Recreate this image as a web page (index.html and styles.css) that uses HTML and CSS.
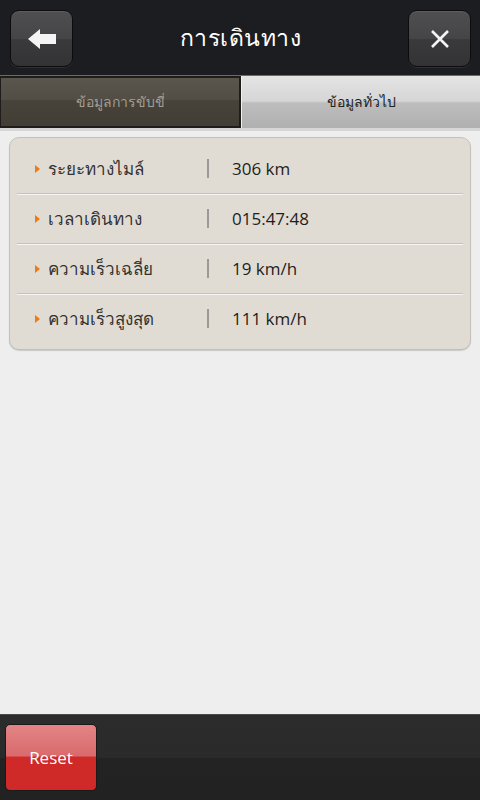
FILE: index.html
```html
<!doctype html>
<html>
  <head>
    <meta charset='utf-8'>
    <title>การเดินทาง</title>
    <link rel="stylesheet" href="styles.css">
  </head>
  <body>

    <div class="header">
      <button class="btn-dark back">
        <svg width="30" height="22" viewBox="0 0 30 22">
          <path d="M1 11 L13 1 L13 6 L29 6 L29 16 L13 16 L13 21 Z" fill="#f4f4f4"/>
        </svg>
      </button>
      <h1>การเดินทาง</h1>
      <button class="btn-dark close">
        <svg width="20" height="20" viewBox="0 0 20 20">
          <path d="M2 2 L18 18 M18 2 L2 18" stroke="#f4f4f4" stroke-width="2.6"/>
        </svg>
      </button>
    </div>

    <div class="tabs">
      <div class="tab active">ข้อมูลการขับขี่</div>
      <div class="tab">ข้อมูลทั่วไป</div>
    </div>

    <div class="content">
      <ul class="stats">
        <li><span class="label">ระยะทางไมล์</span><span class="sep"></span><span class="value">306 km</span></li>
        <li><span class="label">เวลาเดินทาง</span><span class="sep"></span><span class="value">015:47:48</span></li>
        <li><span class="label">ความเร็วเฉลี่ย</span><span class="sep"></span><span class="value">19 km/h</span></li>
        <li><span class="label">ความเร็วสูงสุด</span><span class="sep"></span><span class="value">111 km/h</span></li>
      </ul>
    </div>

    <div class="footer">
      <button class="reset">Reset</button>
    </div>

  </body>
</html>
```

FILE: styles.css
```css
html, body {
  margin: 0;
  height: 100%;
}

body {
  width: 480px;
  height: 800px;
  display: flex;
  flex-direction: column;
  background: #eeeeee;
  font-family: 'Open Sans', 'Noto Sans', 'DejaVu Sans', sans-serif;
  overflow: hidden;
}

button {
  font-family: inherit;
  cursor: pointer;
}

/* header */

.header {
  height: 75px;
  flex: none;
  display: flex;
  align-items: center;
  justify-content: space-between;
  padding: 0 9px 0 10px;
  box-sizing: border-box;
  background: #1b1d21;
}

.header h1 {
  margin: 0;
  color: #fff;
  font-size: 23px;
  font-weight: normal;
  letter-spacing: 0.5px;
}

.btn-dark {
  width: 63px;
  height: 57px;
  margin-top: 2px;
  border: 1px solid #0c0c0e;
  border-radius: 9px;
  background: linear-gradient(#4f4f51 0%, #454547 50%, #3a3a3c 51%, #333335 100%);
  box-shadow: inset 0 1px 0 #5e5e60, 0 1px 0 #2e3035;
  display: flex;
  align-items: center;
  justify-content: center;
  padding: 0;
}

/* tabs */

.tabs {
  height: 56px;
  flex: none;
  display: flex;
  box-sizing: border-box;
  border-top: 1px solid #6a6a6a;
  border-bottom: 3px solid #d6d6d6;
}

.tab {
  flex: 1;
  display: flex;
  align-items: center;
  justify-content: center;
  font-size: 14px;
  color: #222;
  background: linear-gradient(#e4e4e4 0%, #d6d6d6 48%, #bdbdbd 52%, #b0b0b0 100%);
  border-left: 1px solid #f2f2f2;
}

.tab.active {
  color: #a39e94;
  background: linear-gradient(#5a564d 0%, #524e46 45%, #47433b 46%, #423e36 100%);
  border: 2px solid #1e1d1a;
  border-left-width: 1px;
}

/* stats */

.content {
  flex: 1;
  padding: 6px 9px;
}

.stats {
  list-style: none;
  margin: 0;
  padding: 6px 7px;
  background: #e1dcd3;
  border: 1px solid #c4c1bc;
  border-radius: 10px;
  box-shadow: 0 1px 1px #c8c8c8;
}

.stats li {
  height: 49px;
  display: flex;
  align-items: center;
  border-bottom: 1px solid #c6c2bb;
  box-shadow: 0 1px 0 #f8f6f2;
  font-size: 17px;
  color: #222;
}

.stats li:last-child {
  border-bottom: none;
  box-shadow: none;
}

.label {
  width: 190px;
  padding-left: 31px;
  box-sizing: border-box;
  position: relative;
  color: #333;
}

.label:before {
  content: '';
  position: absolute;
  left: 18px;
  top: 50%;
  margin-top: -4px;
  border-left: 5px solid #f07a10;
  border-top: 4px solid transparent;
  border-bottom: 4px solid transparent;
}

.sep {
  width: 2px;
  height: 19px;
  background: #9c9996;
}

.value {
  padding-left: 23px;
  color: #1e1e1e;
}

/* footer */

.footer {
  height: 86px;
  flex: none;
  box-sizing: border-box;
  border-top: 1px solid #4a4a4a;
  background: linear-gradient(#2c2c2c 0%, #2a2a2a 50%, #232323 51%, #222 100%);
  padding: 9px 5px;
}

.reset {
  width: 92px;
  height: 67px;
  border: 1px solid #1a1a1a;
  border-radius: 5px;
  background: linear-gradient(#e38486 0%, #d96a6c 48%, #cf2a28 49%, #cf2a29 100%);
  color: #fff;
  font-size: 17px;
  padding: 0;
}
```
